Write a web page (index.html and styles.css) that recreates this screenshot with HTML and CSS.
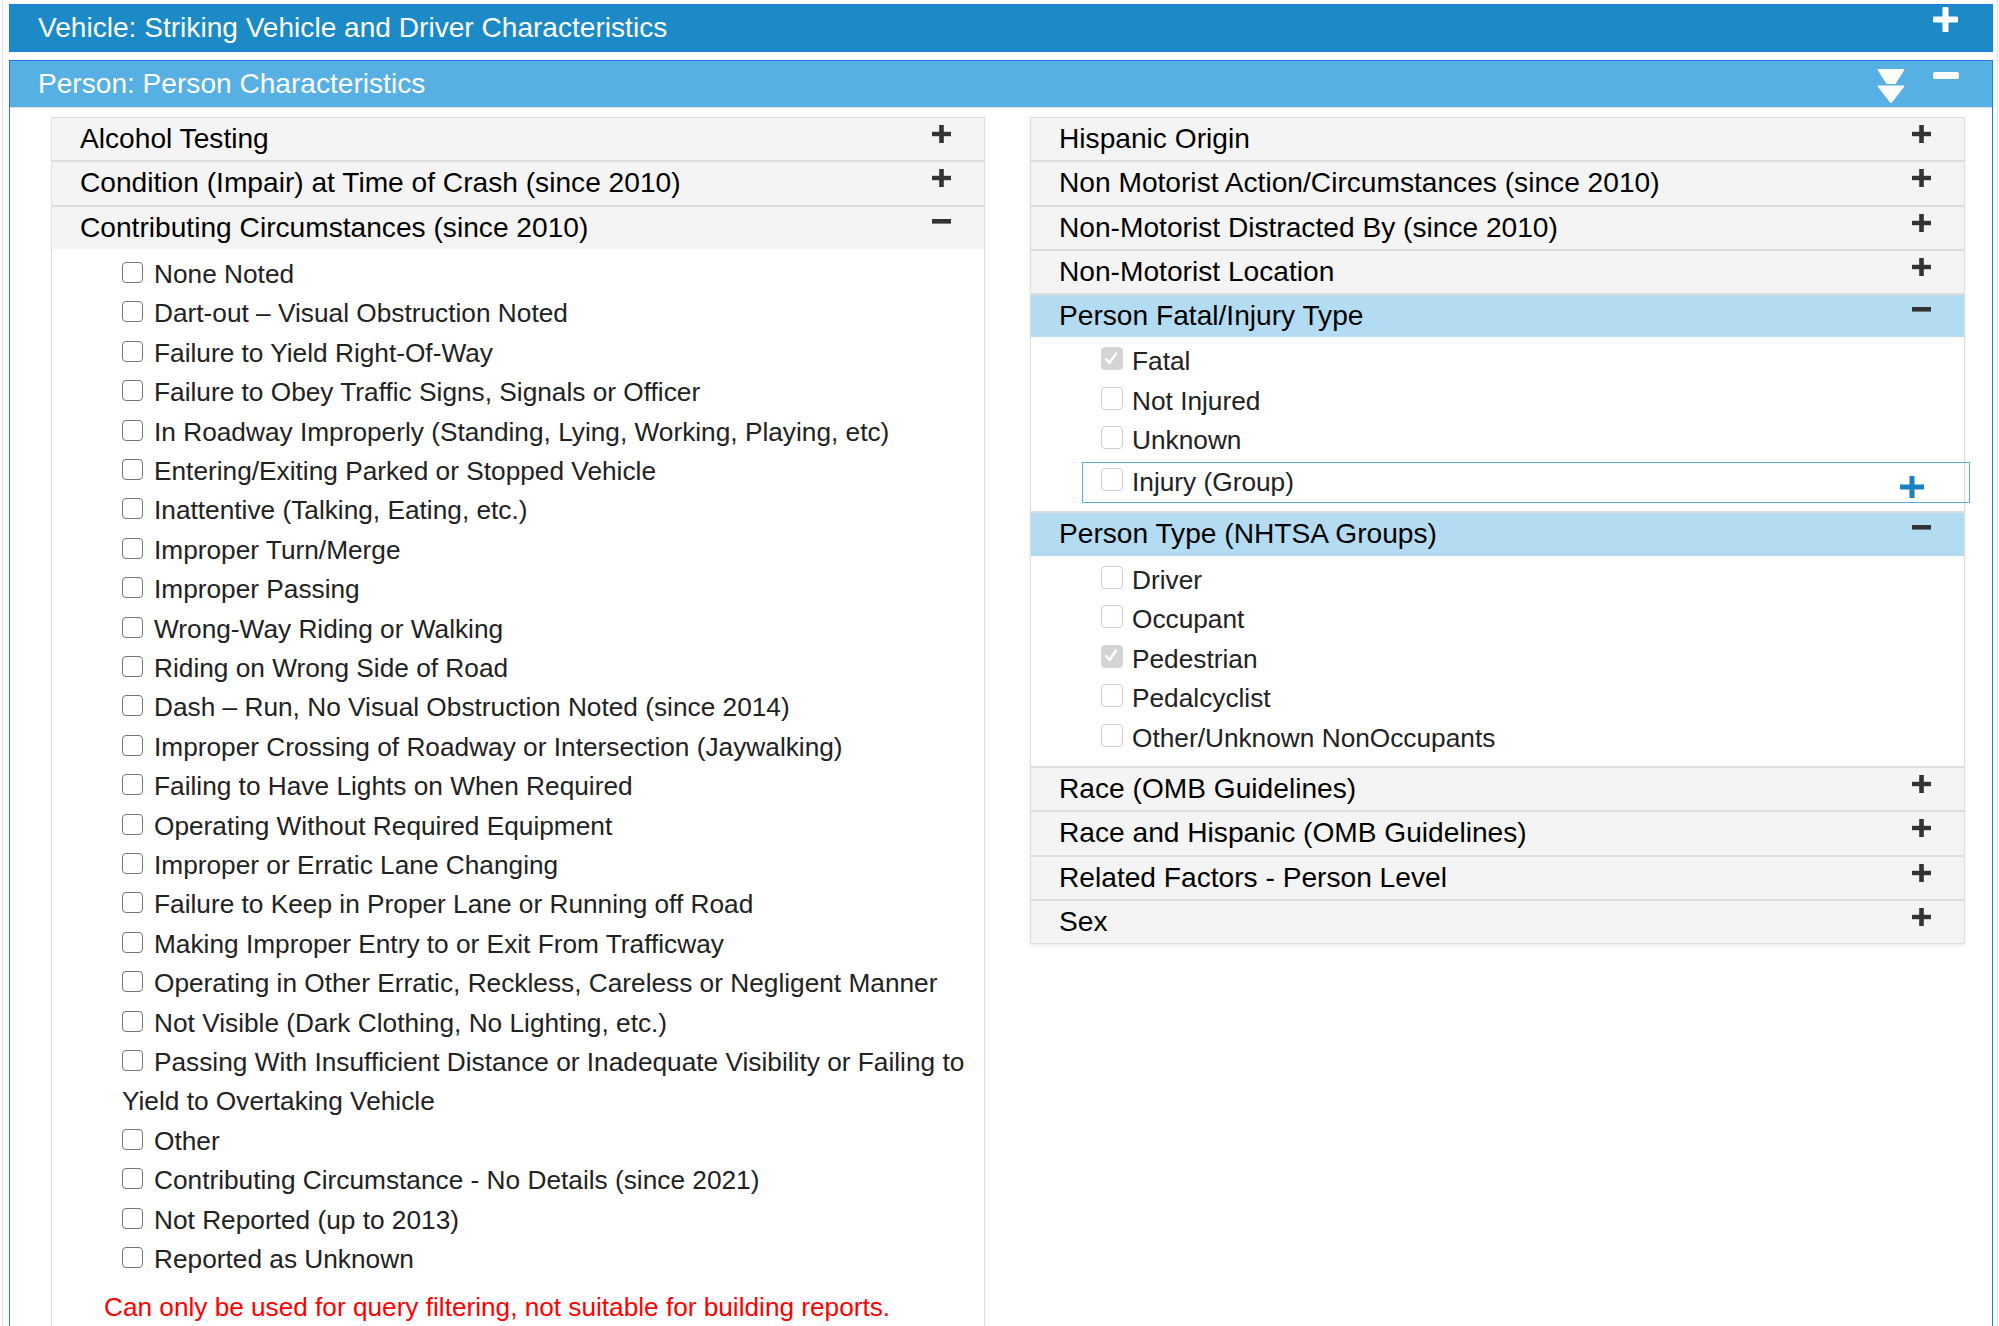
FILE: index.html
```html
<!DOCTYPE html>
<html lang="en">
<head>
<meta charset="utf-8">
<title>Person Characteristics</title>
<link rel="stylesheet" href="styles.css">
</head>
<body>
<div class="page">
  <section class="panel">
    <div class="panel-head head-dark">
      <span class="panel-title">Vehicle: Striking Vehicle and Driver Characteristics</span>
      <svg class="ico-bar-plus" width="25" height="25" viewBox="0 0 25 25"><rect x="9.5" y="0" width="6" height="25" rx="1" fill="#fff"/><rect x="0" y="9.5" width="25" height="6" rx="1" fill="#fff"/></svg>
    </div>
  </section>

  <section class="panel panel-open">
    <div class="panel-head head-light">
      <span class="panel-title">Person: Person Characteristics</span>
      <svg class="ico-chev" width="28" height="34" viewBox="0 0 28 34"><path d="M1.5 0 H26.5 Q28 0 27 1.5 L18.5 15 H9.5 L1 1.5 Q0 0 1.5 0 Z" fill="#fff"/><path d="M1.5 16.5 H26.5 Q28 16.5 27 18 L15 33.5 Q14 34.5 13 33.5 L1 18 Q0 16.5 1.5 16.5 Z" fill="#fff"/></svg>
      <svg class="ico-bar-minus" width="26" height="7" viewBox="0 0 26 7"><rect x="0" y="0" width="26" height="7" rx="2" fill="#fff"/></svg>
    </div>
    <div class="panel-body">
      <div class="col col-left">
        <div class="sec">
          <div class="sec-head">Alcohol Testing<svg class="ico-plus" width="19" height="18" viewBox="0 0 19 18"><rect x="7.2" y="0" width="4.6" height="18" fill="#333"/><rect x="0" y="6.8" width="19" height="4.4" fill="#333"/></svg></div>
        </div>
        <div class="sec">
          <div class="sec-head">Condition (Impair) at Time of Crash (since 2010)<svg class="ico-plus" width="19" height="18" viewBox="0 0 19 18"><rect x="7.2" y="0" width="4.6" height="18" fill="#333"/><rect x="0" y="6.8" width="19" height="4.4" fill="#333"/></svg></div>
        </div>
        <div class="sec">
          <div class="sec-head">Contributing Circumstances (since 2010)<svg class="ico-minus" width="19" height="5" viewBox="0 0 19 5"><rect x="0" y="0" width="19" height="4.6" fill="#333"/></svg></div>
          <div class="sec-body sec-body-left">
            <ul class="opts">
              <li class="opt"><span class="cb"></span>None Noted</li>
              <li class="opt"><span class="cb"></span>Dart-out – Visual Obstruction Noted</li>
              <li class="opt"><span class="cb"></span>Failure to Yield Right-Of-Way</li>
              <li class="opt"><span class="cb"></span>Failure to Obey Traffic Signs, Signals or Officer</li>
              <li class="opt"><span class="cb"></span>In Roadway Improperly (Standing, Lying, Working, Playing, etc)</li>
              <li class="opt"><span class="cb"></span>Entering/Exiting Parked or Stopped Vehicle</li>
              <li class="opt"><span class="cb"></span>Inattentive (Talking, Eating, etc.)</li>
              <li class="opt"><span class="cb"></span>Improper Turn/Merge</li>
              <li class="opt"><span class="cb"></span>Improper Passing</li>
              <li class="opt"><span class="cb"></span>Wrong-Way Riding or Walking</li>
              <li class="opt"><span class="cb"></span>Riding on Wrong Side of Road</li>
              <li class="opt"><span class="cb"></span>Dash – Run, No Visual Obstruction Noted (since 2014)</li>
              <li class="opt"><span class="cb"></span>Improper Crossing of Roadway or Intersection (Jaywalking)</li>
              <li class="opt"><span class="cb"></span>Failing to Have Lights on When Required</li>
              <li class="opt"><span class="cb"></span>Operating Without Required Equipment</li>
              <li class="opt"><span class="cb"></span>Improper or Erratic Lane Changing</li>
              <li class="opt"><span class="cb"></span>Failure to Keep in Proper Lane or Running off Road</li>
              <li class="opt"><span class="cb"></span>Making Improper Entry to or Exit From Trafficway</li>
              <li class="opt"><span class="cb"></span>Operating in Other Erratic, Reckless, Careless or Negligent Manner</li>
              <li class="opt"><span class="cb"></span>Not Visible (Dark Clothing, No Lighting, etc.)</li>
              <li class="opt"><span class="cb"></span>Passing With Insufficient Distance or Inadequate Visibility or Failing to Yield to Overtaking Vehicle</li>
              <li class="opt"><span class="cb"></span>Other</li>
              <li class="opt"><span class="cb"></span>Contributing Circumstance - No Details (since 2021)</li>
              <li class="opt"><span class="cb"></span>Not Reported (up to 2013)</li>
              <li class="opt"><span class="cb"></span>Reported as Unknown</li>
            </ul>
            <p class="note">Can only be used for query filtering, not suitable for building reports.</p>
          </div>
        </div>
      </div>

      <div class="col col-right">
        <div class="sec">
          <div class="sec-head">Hispanic Origin<svg class="ico-plus" width="19" height="18" viewBox="0 0 19 18"><rect x="7.2" y="0" width="4.6" height="18" fill="#333"/><rect x="0" y="6.8" width="19" height="4.4" fill="#333"/></svg></div>
        </div>
        <div class="sec">
          <div class="sec-head">Non Motorist Action/Circumstances (since 2010)<svg class="ico-plus" width="19" height="18" viewBox="0 0 19 18"><rect x="7.2" y="0" width="4.6" height="18" fill="#333"/><rect x="0" y="6.8" width="19" height="4.4" fill="#333"/></svg></div>
        </div>
        <div class="sec">
          <div class="sec-head">Non-Motorist Distracted By (since 2010)<svg class="ico-plus" width="19" height="18" viewBox="0 0 19 18"><rect x="7.2" y="0" width="4.6" height="18" fill="#333"/><rect x="0" y="6.8" width="19" height="4.4" fill="#333"/></svg></div>
        </div>
        <div class="sec">
          <div class="sec-head">Non-Motorist Location<svg class="ico-plus" width="19" height="18" viewBox="0 0 19 18"><rect x="7.2" y="0" width="4.6" height="18" fill="#333"/><rect x="0" y="6.8" width="19" height="4.4" fill="#333"/></svg></div>
        </div>
        <div class="sec">
          <div class="sec-head sec-head-active">Person Fatal/Injury Type<svg class="ico-minus" width="19" height="5" viewBox="0 0 19 5"><rect x="0" y="0" width="19" height="4.6" fill="#333"/></svg></div>
          <div class="sec-body">
            <ul class="opts opts-dis">
              <li class="opt"><span class="cb cb-dis cb-on"><svg width="22" height="23" viewBox="0 0 22 23"><path d="M6 12 L9.5 16 L16 6.5" fill="none" stroke="#fff" stroke-width="2.4" stroke-linecap="round" stroke-linejoin="round"/></svg></span>Fatal</li>
              <li class="opt"><span class="cb cb-dis"></span>Not Injured</li>
              <li class="opt"><span class="cb cb-dis"></span>Unknown</li>
              <li class="opt opt-group"><span class="cb cb-dis"></span>Injury (Group)<svg class="ico-group-plus" width="24" height="22" viewBox="0 0 24 22"><rect x="9.5" y="0" width="5" height="22" fill="#1b7fc4"/><rect x="0" y="8.5" width="24" height="5" fill="#1b7fc4"/></svg></li>
            </ul>
          </div>
        </div>
        <div class="sec">
          <div class="sec-head sec-head-active">Person Type (NHTSA Groups)<svg class="ico-minus" width="19" height="5" viewBox="0 0 19 5"><rect x="0" y="0" width="19" height="4.6" fill="#333"/></svg></div>
          <div class="sec-body">
            <ul class="opts opts-dis">
              <li class="opt"><span class="cb cb-dis"></span>Driver</li>
              <li class="opt"><span class="cb cb-dis"></span>Occupant</li>
              <li class="opt"><span class="cb cb-dis cb-on"><svg width="22" height="23" viewBox="0 0 22 23"><path d="M6 12 L9.5 16 L16 6.5" fill="none" stroke="#fff" stroke-width="2.4" stroke-linecap="round" stroke-linejoin="round"/></svg></span>Pedestrian</li>
              <li class="opt"><span class="cb cb-dis"></span>Pedalcyclist</li>
              <li class="opt"><span class="cb cb-dis"></span>Other/Unknown NonOccupants</li>
            </ul>
          </div>
        </div>
        <div class="sec">
          <div class="sec-head">Race (OMB Guidelines)<svg class="ico-plus" width="19" height="18" viewBox="0 0 19 18"><rect x="7.2" y="0" width="4.6" height="18" fill="#333"/><rect x="0" y="6.8" width="19" height="4.4" fill="#333"/></svg></div>
        </div>
        <div class="sec">
          <div class="sec-head">Race and Hispanic (OMB Guidelines)<svg class="ico-plus" width="19" height="18" viewBox="0 0 19 18"><rect x="7.2" y="0" width="4.6" height="18" fill="#333"/><rect x="0" y="6.8" width="19" height="4.4" fill="#333"/></svg></div>
        </div>
        <div class="sec">
          <div class="sec-head">Related Factors - Person Level<svg class="ico-plus" width="19" height="18" viewBox="0 0 19 18"><rect x="7.2" y="0" width="4.6" height="18" fill="#333"/><rect x="0" y="6.8" width="19" height="4.4" fill="#333"/></svg></div>
        </div>
        <div class="sec">
          <div class="sec-head">Sex<svg class="ico-plus" width="19" height="18" viewBox="0 0 19 18"><rect x="7.2" y="0" width="4.6" height="18" fill="#333"/><rect x="0" y="6.8" width="19" height="4.4" fill="#333"/></svg></div>
        </div>
      </div>
    </div>
  </section>
</div>
</body>
</html>
```

FILE: styles.css
```css
* { box-sizing: border-box; }

html, body {
  margin: 0;
  padding: 0;
  background: #fff;
}

body {
  font-family: "Liberation Sans", Arial, sans-serif;
  color: #222;
}

.page {
  margin: 0 1px 0 2px;
  padding: 4px 4px 0 6px;
  border-left: 1px solid #e2e2e2;
  border-right: 1px solid #e2e2e2;
  min-height: 1400px;
}

.panel {
  border: 1px solid #1e7be6;
}

.panel + .panel {
  margin-top: 8px;
}

.panel-open {
  min-height: 1380px;
}

.panel-head {
  position: relative;
  height: 46px;
  display: flex;
  align-items: center;
  padding-left: 28px;
  color: #fff;
  font-size: 28.1px;
}

.head-dark {
  background: #1b8ac6;
}

.head-light {
  background: #56b0e4;
  border-bottom: 1px solid #dedede;
  height: 47px;
}

.panel-title {
  white-space: nowrap;
}

.ico-bar-plus {
  position: absolute;
  right: 34px;
  top: 2px;
}

.ico-chev {
  position: absolute;
  right: 87px;
  top: 8px;
}

.ico-bar-minus {
  position: absolute;
  right: 33px;
  top: 11px;
}

.panel-body {
  display: grid;
  grid-template-columns: 934px 935px;
  column-gap: 45px;
  padding: 9px 27px 0 41px;
  align-items: start;
}

.col {
  border: 1px solid #dddddd;
  background: #fff;
}

.col-left {
  min-height: 1300px;
}

.col-right {
  box-shadow: 0 2px 3px rgba(0, 0, 0, 0.08);
}

.sec + .sec {
  border-top: 2px solid #dddddd;
}

.sec-head {
  position: relative;
  height: 42.3px;
  line-height: 42px;
  padding-left: 28px;
  font-size: 28.15px;
  color: #000;
  background: #f4f4f4;
  white-space: nowrap;
}

.sec-head-active {
  background: #b3dcf2;
}

.ico-plus {
  position: absolute;
  right: 33px;
  top: 7px;
}

.ico-minus {
  position: absolute;
  right: 33px;
  top: 12px;
}

.sec-body {
  padding: 5px 0 8px 0;
}

.sec-body-left {
  padding-top: 6px;
}

.opts {
  list-style: none;
  margin: 0;
  padding: 0 0 0 70px;
}

.opt {
  font-size: 26.25px;
  line-height: 39.4px;
  color: #222;
  padding-right: 10px;
}

.opts-dis .opt {
  line-height: 39.5px;
}

.cb {
  display: inline-block;
  vertical-align: top;
  width: 21px;
  height: 21px;
  margin: 7px 11px 0 0;
  border: 1.8px solid #767676;
  border-radius: 4px;
  background: #fff;
}

.cb-dis {
  width: 22px;
  height: 23px;
  margin: 5px 9px 0 0;
  border: 1.6px solid #cfcfcf;
  background: #fff;
}

.cb-on {
  border-color: #d4d4d4;
  background: #d4d4d4;
  position: relative;
}

.cb-on svg {
  position: absolute;
  left: -1.6px;
  top: -1.6px;
}

.opts-dis .opt-group {
  position: relative;
  margin: 1px -6px 0 -19px;
  padding-left: 18px;
  border: 1px solid #5aaee2;
  line-height: 39.4px;
}

.ico-group-plus {
  position: absolute;
  right: 45px;
  bottom: 4px;
}

.note {
  margin: 9px 0 0 0;
  padding-left: 52px;
  font-size: 26.2px;
  line-height: 39.4px;
  color: #ff0000;
}
```
